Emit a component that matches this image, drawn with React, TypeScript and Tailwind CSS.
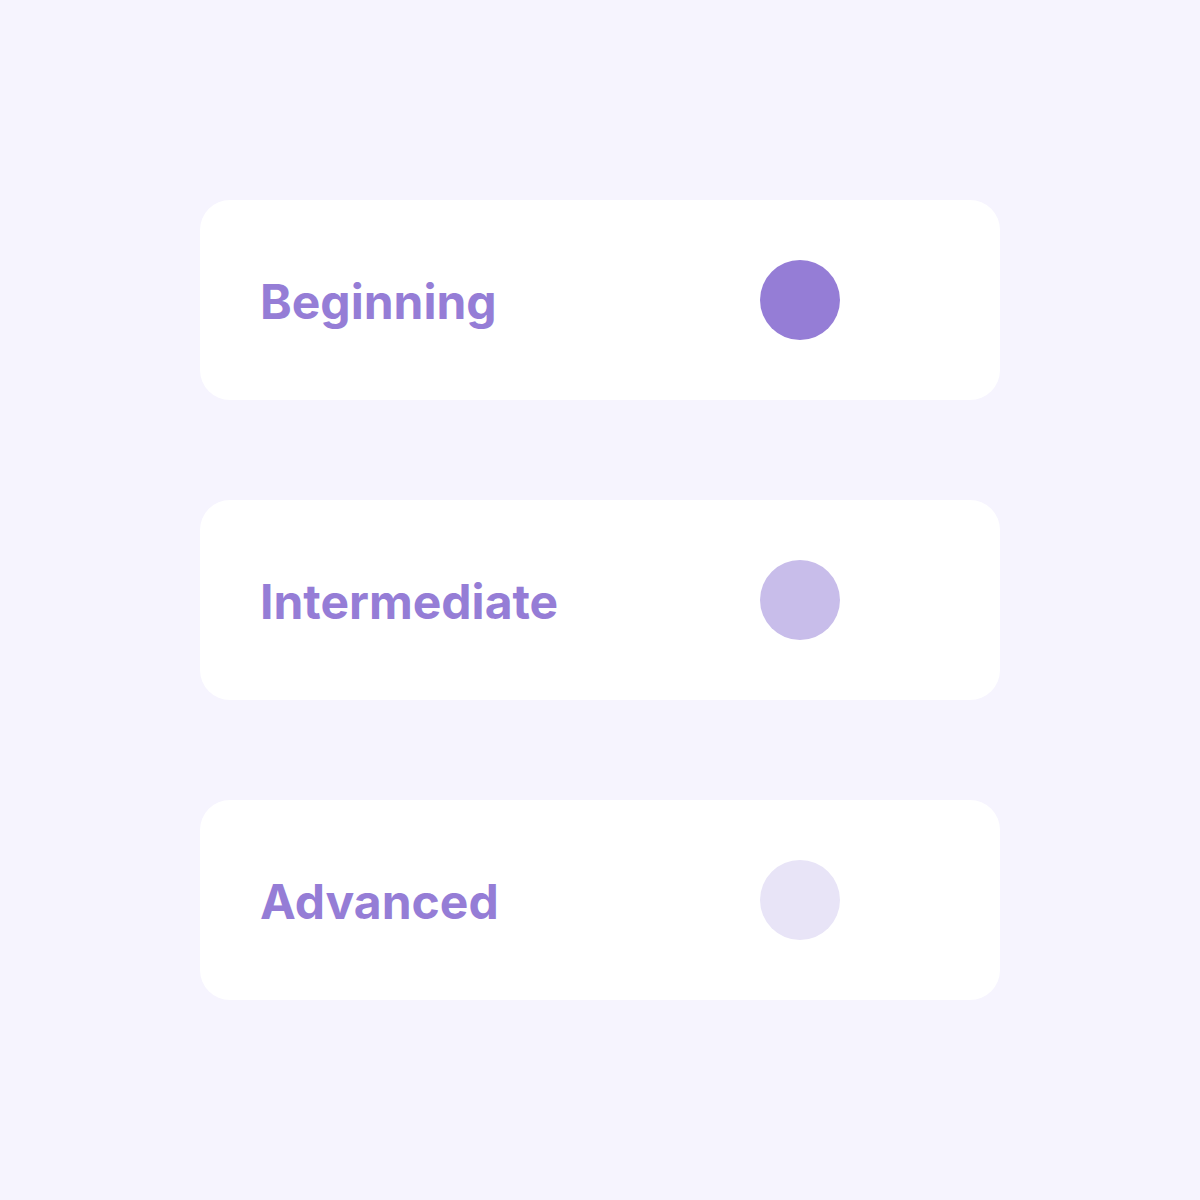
const levels = [
  { label: "Beginning", dot: "bg-[#957dd6]" },
  { label: "Intermediate", dot: "bg-[#c8bdea]" },
  { label: "Advanced", dot: "bg-[#e8e4f7]" },
];

export default function App() {
  return (
    <div className="min-h-[1200px] w-full bg-[#f6f4fe] flex flex-col items-center pt-[200px] gap-[100px] font-['Inter',sans-serif]">
      {levels.map((level) => (
        <div
          key={level.label}
          className="w-[800px] h-[200px] bg-white rounded-[30px] flex items-center justify-between pl-[60px] pr-[160px]"
        >
          <span className="mt-1 text-[48px] font-bold text-[#957dd6] leading-none">
            {level.label}
          </span>
          <div className={`w-20 h-20 rounded-full ${level.dot}`} />
        </div>
      ))}
    </div>
  );
}
